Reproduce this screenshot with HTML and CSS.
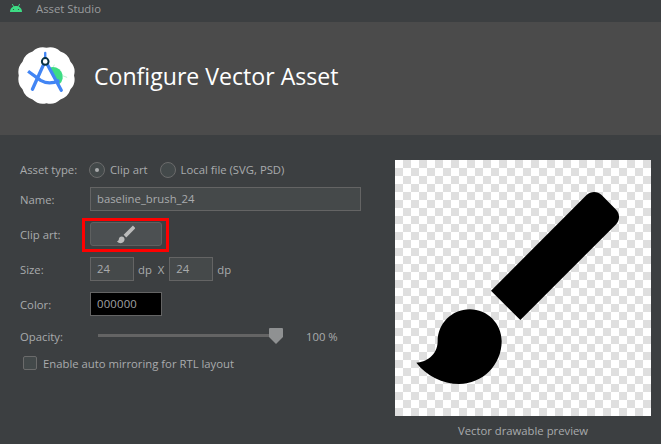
FILE: index.html
```html
<!DOCTYPE html>
<html lang="en">
<head>
    <meta charset="UTF-8">
    <title>Asset Studio</title>
    <link rel="stylesheet" href="styles.css">
</head>
<body>
    <div class="titlebar">
        <svg class="title_icon" viewBox="0 0 12 8">
            <path d="M0 8C0 4.500 2.600 2 6 2s6 2.500 6 6z" fill="#3ddc84"/>
            <path d="M2.300 0 3.900 3M9.700 0 8.100 3" stroke="#3ddc84" stroke-width="0.900" fill="none"/>
            <circle cx="3.500" cy="5.500" r="0.600" fill="#3c3f41"/>
            <circle cx="8.500" cy="5.500" r="0.600" fill="#3c3f41"/>
        </svg>
        <span>Asset Studio</span>
    </div>

    <div class="header">
        <svg class="logo" viewBox="0 0 60 60">
            <path fill="#fff" d="M58 30Q60.200 21.900 54.400 15.900 52 7.900 44.100 5.600 38.100 0 30 1.800 21.900 0 15.900 5.600 7.900 7.900 5.600 15.900 0 21.900 1.800 30 0 38.100 5.600 44.100 7.900 52 15.900 54.400 21.900 60.200 30 58.200 38.100 60.200 44.100 54.400 52 52 54.400 44.100 60.200 38.100 58 30z"/>
            <path fill="#3ddc84" d="M33 22A10 10 0 0 1 43 39z"/>
            <path stroke="#a8eec6" stroke-width="0.800" d="M46 30 51 32M37 21 38 19"/>
            <g stroke="#4285f4" stroke-width="3.400" fill="none">
                <path d="M27 19 15.700 44" stroke-linecap="round"/>
                <path d="M31 19 45 45" stroke-linecap="round"/>
                <path d="M11.300 25.700 24 35C30 38.500 37 38 43 35"/>
                <path d="M28.700 7V13" stroke-width="2.400" stroke-linecap="round"/>
            </g>
            <circle cx="28.700" cy="15.700" r="3.400" fill="#fff" stroke="#073042" stroke-width="2"/>
        </svg>
        <h1>Configure Vector Asset</h1>
    </div>

    <div class="content">
        <div class="form">
            <div class="row row_type">
                <label class="field_label">Asset type:</label>
                <span class="radio radio_on"></span>
                <span class="radio_text">Clip art</span>
                <span class="radio"></span>
                <span class="radio_text">Local file (SVG, PSD)</span>
            </div>
            <div class="row row_name">
                <label class="field_label">Name:</label>
                <div class="input input_name">baseline_brush_24</div>
            </div>
            <div class="row row_clip">
                <label class="field_label">Clip art:</label>
                <div class="clip_button">
                    <svg class="clip_icon" viewBox="0 0 24 24"><path d="M7 14c-1.660 0-3 1.340-3 3 0 1.310-1.160 2-2 2 .920 1.220 2.490 2 4 2 2.210 0 4-1.790 4-4 0-1.660-1.340-3-3-3zm13.710-9.370-1.340-1.340c-.390-.390-1.020-.390-1.410 0L9 12.250 11.750 15l8.960-8.960c.390-.390.390-1.020 0-1.410z"/></svg>
                    <span class="highlight"></span>
                </div>
            </div>
            <div class="row row_size">
                <label class="field_label">Size:</label>
                <div class="input input_size">24</div>
                <span class="unit">dp</span>
                <span class="unit_x">X</span>
                <div class="input input_size">24</div>
                <span class="unit">dp</span>
            </div>
            <div class="row row_color">
                <label class="field_label">Color:</label>
                <div class="color_box">000000</div>
            </div>
            <div class="row row_opacity">
                <label class="field_label">Opacity:</label>
                <div class="slider">
                    <span class="slider_track"></span>
                    <svg class="slider_thumb" viewBox="0 0 14 16"><path d="M0 1Q0 0 1 0H13Q14 0 14 1V9L7 16 0 9z"/></svg>
                </div>
                <span class="slider_value">100 %</span>
            </div>
            <div class="row row_check">
                <span class="checkbox"></span>
                <span class="check_text">Enable auto mirroring for RTL layout</span>
            </div>
        </div>

        <div class="preview">
            <div class="preview_box">
                <svg class="preview_icon" viewBox="0 0 24 24"><path d="M7 14c-1.660 0-3 1.340-3 3 0 1.310-1.160 2-2 2 .920 1.220 2.490 2 4 2 2.210 0 4-1.790 4-4 0-1.660-1.340-3-3-3zm13.710-9.370-1.340-1.340c-.390-.390-1.020-.390-1.410 0L9 12.250 11.750 15l8.960-8.960c.390-.390.390-1.020 0-1.410z"/></svg>
            </div>
            <div class="preview_text">Vector drawable preview</div>
        </div>
    </div>
</body>
</html>
```

FILE: styles.css
```css
html, body{
    margin: 0;
    height: 100%;
    overflow: hidden;
}

body{
    background-color: #3c3f41;
    color: #a9abad;
    font-family: "Open Sans", "Noto Sans", sans-serif;
    font-size: 11.3px;
}

.titlebar{
    height: 22px;
    display: flex;
    align-items: center;
    box-sizing: border-box;
    padding: 0 0 6px 10px;
    gap: 14px;
    color: #9a9c9e;
}

.title_icon{
    width: 12px;
    height: 8px;
}

.header{
    height: 113px;
    background-color: #4b4b4b;
    display: flex;
    align-items: center;
    box-sizing: border-box;
    padding: 0 0 6px 17px;
    gap: 18px;
}

.logo{
    width: 59px;
    height: 59px;
}

h1{
    margin: 0;
    font-size: 23.1px;
    font-weight: 400;
    color: #ffffff;
}

.content{
    display: flex;
    padding: 25px 10px 0 20px;
    justify-content: space-between;
}

.form{
    width: 345px;
}

.row{
    display: flex;
    align-items: center;
}

.row_type{
    height: 20px;
}

.row_type .field_label, .row_type .radio_text{
    margin-top: -1px;
}

.row_name{
    height: 24px;
    margin-top: 7px;
}

.row_clip{
    height: 24px;
    margin-top: 11px;
}

.row_size{
    height: 24px;
    margin-top: 11px;
}

.row_color{
    height: 24px;
    margin-top: 11px;
}

.row_opacity{
    height: 20px;
    margin-top: 10px;
}

.row_check{
    height: 20px;
    margin-top: 7px;
    padding-left: 3px;
}

.field_label{
    width: 70px;
    flex-shrink: 0;
}

.radio{
    width: 14px;
    height: 14px;
    border: 1px solid #6b6b6b;
    border-radius: 50%;
    background-color: #43494a;
    display: flex;
    align-items: center;
    justify-content: center;
    flex-shrink: 0;
}

.radio_on{
    margin-left: -1px;
}

.radio_on::after{
    content: "";
    width: 4px;
    height: 4px;
    border-radius: 50%;
    background-color: #a9abad;
}

.radio_text{
    margin-left: 5px;
    margin-right: 12px;
}

.input{
    box-sizing: border-box;
    height: 24px;
    line-height: 22px;
    border: 1px solid #646464;
    background-color: #45494a;
    padding-left: 6px;
}

.input_name{
    width: 271px;
}

.input_size{
    width: 44px;
}

.unit{
    margin-left: 4px;
}

.unit_x{
    margin: 0 5px 0 6px;
}

.clip_button{
    position: relative;
    box-sizing: border-box;
    width: 72px;
    height: 24px;
    border: 1px solid #5e6060;
    border-radius: 3px;
    background-color: #4c5052;
    display: flex;
    align-items: center;
    justify-content: center;
}

.clip_icon{
    width: 23px;
    height: 23px;
    fill: #bbbbbb;
}

/* red mark laid over the button */
.highlight{
    position: absolute;
    top: -5px;
    left: -9px;
    width: 81px;
    height: 28px;
    border: 3px solid #ff0000;
}

.color_box{
    box-sizing: border-box;
    width: 72px;
    height: 24px;
    line-height: 22px;
    border: 1px solid #646464;
    background-color: #000000;
    padding-left: 6px;
    letter-spacing: 0.2px;
    color: #a0a2a4;
}

.slider{
    position: relative;
    width: 185px;
    height: 20px;
    margin-left: 8px;
    display: flex;
    align-items: center;
}

.slider_track{
    width: 100%;
    height: 3px;
    margin-top: -1px;
    background-color: #646464;
}

.slider_thumb{
    position: absolute;
    right: 0;
    top: 2px;
    width: 14px;
    height: 16px;
    fill: #8f9192;
}

.slider_value{
    margin-left: 23px;
}

.checkbox{
    box-sizing: border-box;
    width: 14px;
    height: 14px;
    border: 1px solid #6b6b6b;
    border-radius: 2px;
    background-color: #43494a;
}

.check_text{
    margin-left: 6px;
}

.preview{
    width: 256px;
}

.preview_box{
    width: 256px;
    height: 256px;
    background-color: #ffffff;
    background-image: conic-gradient(#dfdfdf 25%, #ffffff 0 50%, #dfdfdf 0 75%, #ffffff 0);
    background-size: 16px 16px;
}

.preview_icon{
    display: block;
    width: 256px;
    height: 256px;
}

.preview_text{
    text-align: center;
    margin-top: 7px;
}
```
